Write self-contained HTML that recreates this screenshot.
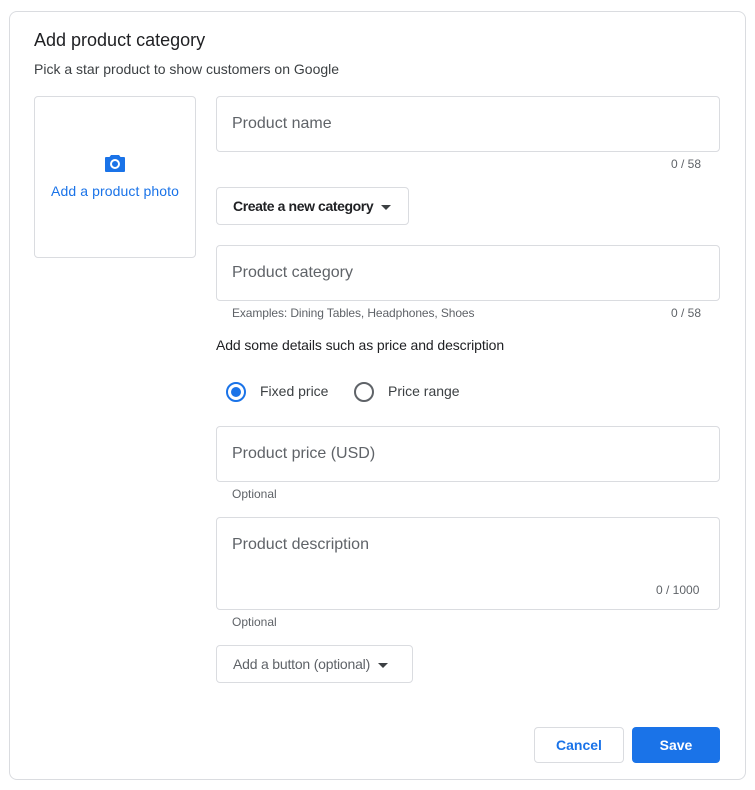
<!DOCTYPE html>
<html><head><style>
*{box-sizing:border-box;margin:0;padding:0}
body{width:755px;height:790px;background:#fff;font-family:"Liberation Sans",Arial,sans-serif;position:relative;overflow:hidden}
.a{position:absolute}
.card{left:9px;top:11px;width:737px;height:769px;border:1px solid #dadce0;border-radius:8px}
.box{border:1px solid #dadce0;border-radius:4px}
.ph{font-size:16px;color:#5f6368}
.sm{font-size:12px;color:#5f6368}
.btn{border:1px solid #dadce0;border-radius:4px;font-size:14px;color:#202124}
.tri{display:inline-block;width:0;height:0;border-left:5px solid transparent;border-right:5px solid transparent;border-top:5px solid #3c4043;vertical-align:middle;margin-left:8px}
</style></head><body>
<div class="a card"></div>
<div class="a" style="left:34px;top:30px;font-size:18px;color:#202124">Add product category</div>
<div class="a" style="left:34px;top:61px;font-size:14px;color:#3c4043">Pick a star product to show customers on Google</div>
<div class="a box" style="left:34px;top:96px;width:162px;height:162px"></div>
<svg class="a" style="left:104px;top:153px" width="22" height="20" viewBox="0 0 22 20"><path d="M7 2h8l1.5 2H20a1 1 0 0 1 1 1v13a1 1 0 0 1-1 1H2a1 1 0 0 1-1-1V5a1 1 0 0 1 1-1h3.5z" fill="#1a73e8"/><circle cx="11" cy="11" r="4" fill="none" stroke="#fff" stroke-width="2"/></svg>
<div class="a" style="left:34px;top:183px;width:162px;text-align:center;font-size:14px;color:#1a73e8;letter-spacing:0.1px">Add a product photo</div>
<div class="a box" style="left:216px;top:96px;width:504px;height:56px"></div>
<div class="a ph" style="left:232px;top:115px">Product name</div>
<div class="a sm" style="left:671px;top:157px">0 / 58</div>
<div class="a btn" style="left:216px;top:187px;width:193px;height:38px;padding:10px 0 0 16px;font-weight:bold;font-size:14px;letter-spacing:-0.4px">Create a new category<span class="tri"></span></div>
<div class="a box" style="left:216px;top:245px;width:504px;height:56px"></div>
<div class="a ph" style="left:232px;top:264px">Product category</div>
<div class="a sm" style="left:232px;top:306px;letter-spacing:-0.1px">Examples: Dining Tables, Headphones, Shoes</div>
<div class="a sm" style="left:671px;top:306px">0 / 58</div>
<div class="a" style="left:216px;top:337px;font-size:14px;color:#202124;letter-spacing:-0.1px">Add some details such as price and description</div>
<div class="a" style="left:226px;top:382px;width:20px;height:20px;border:2px solid #1a73e8;border-radius:50%"></div>
<div class="a" style="left:231px;top:387px;width:10px;height:10px;background:#1a73e8;border-radius:50%"></div>
<div class="a" style="left:260px;top:383px;font-size:14px;color:#3c4043">Fixed price</div>
<div class="a" style="left:354px;top:382px;width:20px;height:20px;border:2px solid #5f6368;border-radius:50%"></div>
<div class="a" style="left:388px;top:383px;font-size:14px;color:#3c4043">Price range</div>
<div class="a box" style="left:216px;top:426px;width:504px;height:56px"></div>
<div class="a ph" style="left:232px;top:445px">Product price (USD)</div>
<div class="a sm" style="left:232px;top:487px">Optional</div>
<div class="a box" style="left:216px;top:517px;width:504px;height:93px"></div>
<div class="a ph" style="left:232px;top:536px">Product description</div>
<div class="a sm" style="left:656px;top:583px">0 / 1000</div>
<div class="a sm" style="left:232px;top:615px">Optional</div>
<div class="a btn" style="left:216px;top:645px;width:197px;height:38px;padding:10px 0 0 16px;color:#5f6368;letter-spacing:-0.2px">Add a button (optional)<span class="tri"></span></div>
<div class="a btn" style="left:534px;top:727px;width:90px;height:36px;text-align:center;line-height:34px;color:#1a73e8;font-weight:bold">Cancel</div>
<div class="a" style="left:632px;top:727px;width:88px;height:36px;background:#1a73e8;border-radius:4px;text-align:center;line-height:36px;color:#fff;font-weight:bold;font-size:14px">Save</div>
</body></html>
